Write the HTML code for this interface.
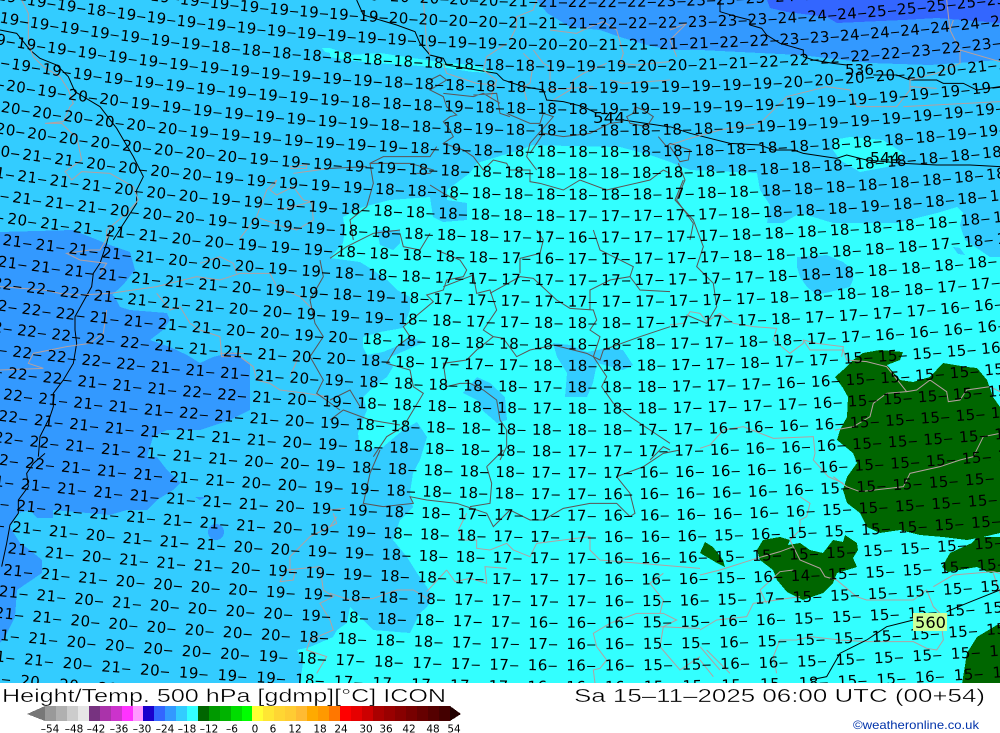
<!DOCTYPE html>
<html><head><meta charset="utf-8"><title>Height/Temp. 500 hPa</title>
<style>
html,body{margin:0;padding:0;background:#fff;width:1000px;height:733px;overflow:hidden}
svg{display:block}
.t text{font:15px "DejaVu Sans",sans-serif;letter-spacing:.5px;fill:#000}
.a{fill:none;stroke:#b5a0a0;stroke-width:3}
.b{fill:none;stroke:#5f5252;stroke-width:3}
.k{fill:none;stroke:#000;stroke-width:3}
.l text{font:10.5px "DejaVu Sans",sans-serif;text-anchor:middle;fill:#000}
</style></head><body>
<svg width="1000" height="733" viewBox="0 0 1000 733" xmlns="http://www.w3.org/2000/svg">
<defs>
<path id="rm" d="M-40 -51.7Q500 49.1 1040 -22.9"/><path id="r0" d="M-40 -29.2Q500 69.7 1040 -.9"/><path id="r1" d="M-40 -6.7Q500 90.4 1040 21"/><path id="r2" d="M-40 15.7Q500 111 1040 42.9"/><path id="r3" d="M-40 38.2Q500 131.7 1040 64.9"/><path id="r4" d="M-40 60.6Q500 152.3 1040 86.8"/><path id="r5" d="M-40 82.9Q500 173.1 1040 108.7"/><path id="r6" d="M-40 105.3Q500 193.8 1040 130.6"/><path id="r7" d="M-40 127.6Q500 214.5 1040 152.4"/><path id="r8" d="M-40 149.9Q500 235.3 1040 174.3"/><path id="r9" d="M-40 172.2Q500 256.1 1040 196.1"/><path id="r10" d="M-40 194.4Q500 276.9 1040 218"/><path id="r11" d="M-40 216.6Q500 297.7 1040 239.8"/><path id="r12" d="M-40 238.8Q500 318.5 1040 261.6"/><path id="r13" d="M-40 261Q500 339.3 1040 283.4"/><path id="r14" d="M-40 283.2Q500 360.2 1040 305.2"/><path id="r15" d="M-40 305.3Q500 381.1 1040 327"/><path id="r16" d="M-40 327.4Q500 401.9 1040 348.7"/><path id="r17" d="M-40 349.6Q500 422.8 1040 370.5"/><path id="r18" d="M-40 371.7Q500 443.7 1040 392.3"/><path id="r19" d="M-40 393.7Q500 464.6 1040 414"/><path id="r20" d="M-40 415.8Q500 485.6 1040 435.7"/><path id="r21" d="M-40 437.8Q500 506.5 1040 457.5"/><path id="r22" d="M-40 459.9Q500 527.5 1040 479.2"/><path id="r23" d="M-40 481.9Q500 548.4 1040 500.9"/><path id="r24" d="M-40 503.9Q500 569.4 1040 522.6"/><path id="r25" d="M-40 525.9Q500 590.4 1040 544.3"/><path id="r26" d="M-40 547.8Q500 611.4 1040 566"/><path id="r27" d="M-40 569.8Q500 632.4 1040 587.7"/><path id="r28" d="M-40 591.7Q500 653.4 1040 609.4"/><path id="r29" d="M-40 613.7Q500 674.4 1040 631"/><path id="r30" d="M-40 635.6Q500 695.4 1040 652.7"/><path id="r31" d="M-40 657.5Q500 716.5 1040 674.4"/><path id="r32" d="M-40 679.4Q500 737.5 1040 696"/>
</defs>

<rect width="1000" height="733" fill="#33ccff"/>
<g shape-rendering="crispEdges">
<polygon fill="#3399ff" points="537,0 547,13 570,27 600,30 620,37 647,45 670,50 700,50 800,55 870,63 930,65 1000,60 1000,0"/>
<polygon fill="#3366ff" points="767,0 770,8 787,12 827,17 837,23 903,20 937,18 1000,23 1000,0"/>
<polygon fill="#3399ff" points="0,232 73,230 110,245 130,252 135,270 123,285 112,295 115,297 120,307 130,310 167,313 170,320 163,330 150,340 170,347 187,355 200,363 213,357 233,352 250,363 250,390 250,410 230,420 200,430 167,430 153,437 147,457 157,457 167,470 180,483 173,490 157,500 147,510 127,510 110,515 53,510 53,518 37,518 30,510 18,513 10,527 20,543 30,550 42,560 42,573 17,590 15,617 5,637 0,643"/>
<circle cx="216" cy="532" r="8" fill="#3399ff"/>
<polygon fill="#3399ff" points="195,497 207,497 200,500"/>
<polygon fill="#33ffff" points="330,48 350,55 380,53 413,58 447,63 473,65 497,73 473,72 447,68 407,65 373,63 347,60 330,57"/>
<polygon fill="#33ffff" points="322,48 330,48 330,53 325,52"/>
<polygon fill="#33ffff" points="833,140 850,137 883,140 903,153 887,167 860,172 840,160 833,150"/>
<polygon fill="#33ffff" points="343,217 363,207 390,200 430,197 433,217 443,222 467,220 467,203 447,200 447,190 470,173 477,163 497,157 520,150 533,145 570,146 620,147 650,155 670,162 690,170 757,173 760,190 770,205 767,223 783,223 800,213 833,223 897,223 937,213 957,207 963,213 960,225 965,240 990,257 1000,257 1000,684 300,684 303,663 297,650 310,647 333,637 337,630 347,623 350,607 363,620 373,630 410,633 420,613 427,607 433,597 427,587 417,573 407,557 393,540 400,520 413,507 410,493 413,473 420,460 427,437 417,422 403,430 383,447 360,450 358,433 363,420 367,410 363,397 373,387 387,377 393,367 388,358 402,352 425,342 410,337 400,345 383,352 367,355 363,347 363,337 380,332 403,328 410,310 410,297 397,290 387,280 373,270 360,262 330,258 343,243 345,230"/>
<polygon fill="#33ccff" points="377,230 400,230 400,243 393,250 380,245"/>
<polygon fill="#33ccff" points="463,393 477,377 490,383 505,397 507,420 497,423 482,410 477,400"/>
<polygon fill="#33ccff" points="553,343 570,345 587,352 607,348 623,350 633,365 623,370 597,363 593,383 587,397 565,397 567,373 557,357"/>
<polygon fill="#33ccff" points="797,257 827,255 843,262 853,270 853,280 850,287 817,295 807,287 800,277 797,267"/>
<polygon fill="#33ccff" points="953,247 960,248 965,255 958,254"/>
<g fill="#006600">
<polygon points="853,360 863,353 880,350 903,352 900,360 887,365 900,380 913,382 930,377 943,363 967,367 977,368 987,380 993,397 1000,407 1000,533 983,537 967,540 943,537 920,535 900,530 880,533 867,527 860,513 847,503 843,490 847,477 857,463 853,453 837,440 840,430 847,417 848,397 843,388 835,377 843,370"/>
<polygon points="1000,537 977,537 972,543 963,547 950,553 942,567 948,572 977,567 990,573 1000,572"/>
<polygon points="757,550 763,540 780,537 790,540 788,545 800,543 810,550 823,553 833,540 843,542 845,535 857,543 858,550 853,558 857,567 837,573 833,583 823,593 803,600 787,592 777,580 773,570 760,560"/>
<polygon points="700,553 705,542 713,547 723,560 725,567 717,563"/>
<polygon points="962,684 967,653 977,637 997,625 1000,625 1000,684"/>
</g>
</g>

<g transform="translate(0,0) scale(.33333)">
<path class="k" d="M0 90L50 100 90 150 120 175 170 195 205 230 225 275 300 320 350 385 400 470 430 530 410 570 410 610 365 680 340 720"/>
<path class="a" d="M65 0L85 40 85 130 100 170 130 200 180 230 205 270 220 310 210 320 190 365 135 370 185 370 210 395 230 410 245 480 195 515 215 540 245 515 330 520 400 560 415 600 380 640 320 690 320 720"/>
<path class="a" d="M720 715L770 650 800 570 830 540 825 555 810 570 830 585 880 560 910 600 935 605 940 660 890 690 850 680 780 655M835 630L880 620 935 605M870 500L920 495 920 505 870 505M880 520L990 505"/>
</g>
<g transform="translate(0,230) scale(.33333)">
<path class="k" d="M330 0L320 40 300 100 280 130 275 170 250 215 225 260 225 300 230 340 220 400 190 450 160 490 160 530 150 560 120 620 115 680"/>
<path class="a" d="M0 170L130 180 180 190 240 195 330 190 470 170 590 140 660 150 720 130 810 130 830 170 900 200 940 240M470 190L510 240 540 230 570 280 600 300 660 320 665 380 720 380 760 410 770 450 810 460 840 480 920 490 980 500M320 240L310 310 270 340 200 350 100 370 85 400 130 415 0 420M330 10L300 60 270 60 200 70 240 90 320 100 300 130M600 100L660 80 700 100 710 130M660 370L740 370M900 370L870 440"/>
<path class="b" d="M960 90L970 140 930 210 945 280 970 320 930 380 970 450 950 490 1020 540"/>
</g>
<g transform="translate(0,450) scale(.33333)">
<path class="k" d="M135 10L100 40 80 70 85 110 55 150 55 190 30 225 20 280 5 350"/>
<path class="a" d="M1000 190L1010 220 930 260 870 320 870 370 885 365 880 390 840 395 860 360 960 350 970 420 1000 440 960 460 990 510 1000 540 930 570 920 600 980 620 950 670"/>
</g>
<g transform="translate(330,0) scale(.33333)">
<path class="k" d="M80 0L100 45 200 75 255 95 270 130 300 165 340 175 350 195 440 210 500 220 520 240 580 260 640 270 650 300 700 305 760 320 800 340M880 360L1020 381"/>
<path class="a" d="M280 0L290 130 300 165M540 120L560 80 560 50 610 30 620 0M530 130L470 170 460 210 500 240 480 300M610 150L640 190 660 200 660 240M580 160L610 190 600 250 580 260 590 300M660 90L740 100 780 80 820 65 860 90 880 160 870 190 920 195 1020 185M670 300L720 270 730 240 760 220 830 190M650 270L790 260M1020 240L880 250 840 240M340 190L350 220 440 250 500 255"/>
<path class="b" d="M300 240L330 225 350 240 300 270 340 290 350 320 380 345 360 350 340 365 360 390 370 410 340 430 400 450 430 470 460 510 490 480 530 490 540 510 600 510 600 545 630 550 700 570 750 540 830 570 960 540 1000 510 1020 520M320 440L300 470 160 470 120 490 130 550 110 620 60 660 70 720M0 505L110 500M120 490L240 490 310 510 300 520 260 520M300 555L340 580 380 600M600 460L640 400 700 410 780 400 840 370 880 365M530 340L600 370 630 370 640 340 670 350 600 430 590 470 620 510M430 285L500 280 510 340 540 350M340 280L430 290 460 280 510 310M915 320L940 330 970 350 950 380 900 370 890 350 910 340 915 320M985 410L1010 440 1020 430"/>
</g>
<g transform="translate(330,230) scale(.33333)">
<path class="b" d="M0 85L50 50 130 10 210 0M210 10L220 50 270 60 300 10M320 60L390 90 410 120 400 140 350 150 340 180 290 195 310 215 220 290 240 320 200 350 170 400 240 420 250 470 280 490 250 540 220 590 170 620 130 680M340 170L430 135 440 190 480 180 500 240 460 300 490 320 440 360 410 390 340 400 350 470 390 460 420 460 460 480 500 510 510 570 530 600 530 650 510 690M480 190L570 140 610 145 680 210 720 235 790 240 800 270 780 300 810 320 790 380 830 440 815 470 850 520 900 560 960 600 1020 640M570 130L570 85 630 70 640 30 620 0M490 320L520 325 560 380 600 360 650 350 670 345 770 370 810 390 820 360 930 320 1020 290M780 240L780 180 840 150 900 140 910 110 810 60 790 0M900 140L930 180 1020 185M0 570L40 540 120 570 210 585M0 510L60 480 90 530M960 690L1000 650 1020 660"/>
</g>
<g transform="translate(330,450) scale(.33333)">
<path class="b" d="M150 0L120 70 100 160 160 170 250 160 240 140 290 150 380 160 470 190 490 230 540 180 600 210 640 210 700 175 780 160 860 160 900 200 915 190 900 130 860 80 940 50 1000 10 1050 0M470 50L520 0M470 50L485 100 480 160 420 170"/>
<path class="a" d="M0 180L45 175M20 200L0 230M410 190L385 240 400 270 440 270 440 295 480 300 530 280 550 300 600 320 620 280 780 260 780 300 810 330 1110 355M350 360L375 395 420 385 470 400 465 350 530 355M0 430L60 450 130 445 200 420 250 420 300 450M350 360L290 425M920 490L1000 490 1040 510 1000 530 990 590 1050 660 1110 620M800 590L790 550 840 520 920 490M800 590L830 630 810 655 790 660 795 700M980 530L1110 535M1000 370L960 400 1000 450 990 490"/>
</g>
<g transform="translate(670,0) scale(.33333)">
<path class="k" d="M150 0L150 35 200 50 240 60 240 75 275 85 290 105 330 130 400 150 400 170 430 180 490 190 530 195M610 225L680 225 720 240 800 240 820 250 880 250 920 270 990 260M0 380L60 400 180 430 270 435 310 450 370 450 400 460 500 475 530 465 590 480 700 490 800 495 900 495 990 500"/>
<path class="a" d="M0 90L50 70 0 120 20 170M850 60L840 90 870 150 870 190 800 220 720 240 720 270 680 320 560 320 540 270 470 260 350 290 270 370 150 390 60 415 0 435M700 320L990 305M840 90L830 0M870 150L990 185M720 260L800 265"/>
<path class="b" d="M0 430L60 450 55 480 30 485 0 440M25 490L45 540 20 600 70 670 60 720"/>
</g>
<g transform="translate(670,180) scale(.33333)">
<path class="b" d="M40 0L15 60 70 120 100 200 80 260 130 310 140 380 110 430 50 405"/>
<path class="a" d="M0 435L40 430 60 395 90 400 110 425 150 400 190 430 250 440 320 445 310 480 360 520 400 490 400 480 440 490 520 500 515 530"/>
</g>
<g transform="translate(700,340) scale(.33333)">
<path class="a" d="M310 0L330 30 430 30 440 60 500 65 560 80 600 130 620 155 650 150 690 120 740 155 745 185 780 180 800 150 870 140 900 155M405 270L460 260 510 230 520 190 560 160 620 155M400 410L440 440 480 455 610 440 630 400 720 380 780 360 820 350 850 290 900 280M0 325L30 315 70 270 130 260 220 295 340 290 345 340 340 360 385 410 430 430M300 470L330 490 320 530 300 540 300 570 270 600 280 620 300 660 360 685 375 710 410 720 470 770 500 780 640 780 680 750 700 800 720 820 730 900 710 930 680 925 640 905 500 905 420 900 330 890 290 900 240 900 220 950 230 1000M0 705L60 690 170 655 240 635 280 620M180 750L240 695 280 690M180 750L200 790M0 870L50 840 140 830 160 790 300 770M700 740L760 705 880 695 900 700M880 700L900 760M0 920L60 990M20 930L90 1000M0 960L40 1010"/>
<path class="k" d="M900 750L800 790 740 815M640 840L560 860 500 900 420 940 380 1010 330 1020"/>
</g>

<g class="t">
<text word-spacing="-5.74"><textPath href="#rm" startOffset="374">19‒ 19‒ 20‒ 20‒ 20‒ 20‒ 21‒ 21‒ 22‒ 22‒ 22‒ 23‒ 23‒ 23‒ 23‒ 24‒ 24‒</textPath></text>
<text word-spacing="-5.45"><textPath href="#r0" startOffset="192.1">19‒ 19‒ 19‒ 19‒ 19‒ 19‒ 19‒ 19‒ 20‒ 20‒ 20‒ 20‒ 21‒ 21‒ 21‒ 22‒ 22‒ 22‒ 23‒ 23‒ 23‒ 24‒ 24‒ 24‒ 25‒ 25‒ 25‒ 25‒ 25‒</textPath></text>
<text word-spacing="-5.17"><textPath href="#r1" startOffset="37">19‒ 19‒ 19‒ 18‒ 19‒ 19‒ 19‒ 19‒ 19‒ 19‒ 19‒ 19‒ 19‒ 19‒ 19‒ 19‒ 19‒ 20‒ 20‒ 20‒ 21‒ 21‒ 21‒ 21‒ 22‒ 22‒ 23‒ 23‒ 24‒ 24‒ 24‒ 24‒ 24‒ 24‒</textPath></text>
<text word-spacing="-4.88"><textPath href="#r2" startOffset="39.5">19‒ 19‒ 19‒ 19‒ 19‒ 19‒ 19‒ 18‒ 18‒ 18‒ 18‒ 18‒ 18‒ 18‒ 18‒ 18‒ 18‒ 18‒ 19‒ 19‒ 19‒ 20‒ 20‒ 21‒ 21‒ 22‒ 22‒ 22‒ 22‒ 22‒ 23‒ 22‒ 23‒ 22‒</textPath></text>
<text word-spacing="-4.6"><textPath href="#r3" startOffset="25.9">19‒ 19‒ 19‒ 19‒ 19‒ 19‒ 19‒ 19‒ 19‒ 19‒ 19‒ 19‒ 19‒ 18‒ 18‒ 18‒ 18‒ 18‒ 18‒ 18‒ 19‒ 19‒ 19‒ 19‒ 19‒ 19‒ 20‒ 20‒ 20‒ 20‒ 20‒ 20‒ 21‒ 21‒</textPath></text>
<text word-spacing="-4.31"><textPath href="#r4" startOffset="20.3">19‒ 19‒ 19‒ 19‒ 19‒ 19‒ 19‒ 19‒ 19‒ 19‒ 19‒ 19‒ 18‒ 18‒ 18‒ 19‒ 18‒ 18‒ 18‒ 18‒ 19‒ 19‒ 19‒ 19‒ 19‒ 19‒ 19‒ 19‒ 19‒ 19‒ 19‒ 19‒ 19‒ 19‒</textPath></text>
<text word-spacing="-4.03"><textPath href="#r5" startOffset="14.8">20‒ 20‒ 19‒ 20‒ 20‒ 19‒ 19‒ 19‒ 19‒ 19‒ 19‒ 19‒ 19‒ 18‒ 18‒ 18‒ 19‒ 18‒ 18‒ 18‒ 18‒ 18‒ 18‒ 18‒ 19‒ 19‒ 19‒ 19‒ 19‒ 19‒ 19‒ 19‒ 19‒ 19‒</textPath></text>
<text word-spacing="-3.74"><textPath href="#r6" startOffset="9.2">20‒ 20‒ 20‒ 20‒ 20‒ 20‒ 20‒ 19‒ 19‒ 19‒ 19‒ 19‒ 19‒ 19‒ 18‒ 19‒ 18‒ 18‒ 18‒ 18‒ 18‒ 18‒ 18‒ 18‒ 18‒ 18‒ 18‒ 18‒ 18‒ 18‒ 18‒ 19‒ 19‒ 19‒</textPath></text>
<text word-spacing="-3.46"><textPath href="#r7" startOffset="3.6">20‒ 20‒ 20‒ 20‒ 20‒ 20‒ 20‒ 20‒ 20‒ 19‒ 19‒ 19‒ 19‒ 19‒ 18‒ 18‒ 18‒ 18‒ 18‒ 18‒ 18‒ 18‒ 18‒ 18‒ 18‒ 18‒ 18‒ 18‒ 18‒ 18‒ 18‒ 18‒ 18‒ 18‒</textPath></text>
<text word-spacing="-3.17"><textPath href="#r8" startOffset="30.3">20‒ 21‒ 21‒ 20‒ 20‒ 20‒ 20‒ 19‒ 19‒ 19‒ 19‒ 19‒ 18‒ 18‒ 18‒ 18‒ 18‒ 18‒ 18‒ 18‒ 18‒ 17‒ 18‒ 18‒ 18‒ 18‒ 18‒ 18‒ 18‒ 18‒ 18‒ 18‒ 18‒</textPath></text>
<text word-spacing="-2.89"><textPath href="#r9" startOffset="25">21‒ 21‒ 21‒ 21‒ 20‒ 20‒ 20‒ 19‒ 19‒ 19‒ 19‒ 18‒ 18‒ 18‒ 18‒ 18‒ 18‒ 18‒ 17‒ 17‒ 17‒ 17‒ 17‒ 18‒ 18‒ 18‒ 18‒ 19‒ 18‒ 18‒ 18‒ 18‒</textPath></text>
<text word-spacing="-2.6"><textPath href="#r10" startOffset="19.6">21‒ 21‒ 21‒ 21‒ 20‒ 20‒ 20‒ 19‒ 19‒ 19‒ 19‒ 18‒ 18‒ 18‒ 18‒ 18‒ 17‒ 17‒ 16‒ 17‒ 17‒ 17‒ 17‒ 18‒ 18‒ 18‒ 18‒ 18‒ 18‒ 18‒ 18‒ 18‒ 18‒</textPath></text>
<text word-spacing="-2.32"><textPath href="#r11" startOffset="14.3">20‒ 20‒ 21‒ 21‒ 21‒ 21‒ 20‒ 20‒ 19‒ 19‒ 19‒ 18‒ 18‒ 18‒ 18‒ 18‒ 17‒ 16‒ 17‒ 17‒ 17‒ 17‒ 17‒ 18‒ 18‒ 18‒ 18‒ 18‒ 18‒ 17‒ 18‒ 18‒</textPath></text>
<text word-spacing="-2.03"><textPath href="#r12" startOffset="9.1">21‒ 21‒ 21‒ 21‒ 21‒ 21‒ 20‒ 20‒ 20‒ 19‒ 19‒ 18‒ 18‒ 18‒ 17‒ 17‒ 17‒ 17‒ 17‒ 17‒ 17‒ 17‒ 17‒ 17‒ 18‒ 18‒ 18‒ 18‒ 18‒ 18‒ 18‒ 18‒</textPath></text>
<text word-spacing="-1.75"><textPath href="#r13" startOffset="3.9">22‒ 21‒ 21‒ 21‒ 21‒ 21‒ 21‒ 21‒ 20‒ 19‒ 19‒ 18‒ 19‒ 18‒ 17‒ 17‒ 17‒ 17‒ 17‒ 17‒ 17‒ 17‒ 17‒ 17‒ 18‒ 18‒ 18‒ 18‒ 18‒ 17‒ 17‒ 17‒</textPath></text>
<text word-spacing="-1.46"><textPath href="#r14" startOffset="32.5">22‒ 22‒ 22‒ 21‒ 21‒ 21‒ 21‒ 20‒ 20‒ 19‒ 19‒ 19‒ 18‒ 18‒ 17‒ 17‒ 18‒ 18‒ 18‒ 17‒ 17‒ 17‒ 17‒ 18‒ 17‒ 17‒ 17‒ 17‒ 16‒ 16‒ 16‒</textPath></text>
<text word-spacing="-1.18"><textPath href="#r15" startOffset="27.6">22‒ 22‒ 22‒ 21‒ 21‒ 21‒ 21‒ 20‒ 20‒ 19‒ 20‒ 18‒ 18‒ 18‒ 18‒ 18‒ 18‒ 18‒ 18‒ 18‒ 17‒ 17‒ 18‒ 18‒ 17‒ 17‒ 16‒ 16‒ 16‒ 16‒</textPath></text>
<text word-spacing="-.89"><textPath href="#r16" startOffset="22.6">22‒ 22‒ 22‒ 22‒ 22‒ 21‒ 21‒ 21‒ 21‒ 20‒ 20‒ 18‒ 18‒ 17‒ 17‒ 17‒ 18‒ 18‒ 18‒ 18‒ 17‒ 17‒ 18‒ 17‒ 17‒ 15‒ 15‒ 15‒ 15‒ 16‒</textPath></text>
<text word-spacing="-.61"><textPath href="#r17" startOffset="17.6">22‒ 22‒ 22‒ 22‒ 22‒ 21‒ 21‒ 21‒ 21‒ 20‒ 19‒ 18‒ 18‒ 18‒ 18‒ 18‒ 17‒ 18‒ 18‒ 18‒ 17‒ 17‒ 17‒ 16‒ 16‒ 15‒ 15‒ 15‒ 15‒ 15‒</textPath></text>
<text word-spacing="-.32"><textPath href="#r18" startOffset="12.7">22‒ 22‒ 22‒ 21‒ 21‒ 21‒ 22‒ 22‒ 21‒ 20‒ 19‒ 18‒ 18‒ 18‒ 18‒ 18‒ 17‒ 18‒ 18‒ 18‒ 17‒ 17‒ 17‒ 17‒ 16‒ 15‒ 15‒ 15‒ 15‒ 15‒</textPath></text>
<text word-spacing="-.04"><textPath href="#r19" startOffset="7.7">22‒ 22‒ 21‒ 21‒ 21‒ 21‒ 22‒ 21‒ 21‒ 20‒ 19‒ 18‒ 18‒ 18‒ 18‒ 18‒ 18‒ 18‒ 18‒ 17‒ 17‒ 16‒ 16‒ 16‒ 16‒ 15‒ 15‒ 15‒ 15‒ 15‒</textPath></text>
<text word-spacing=".25"><textPath href="#r20" startOffset="38.3">22‒ 21‒ 21‒ 21‒ 21‒ 21‒ 21‒ 21‒ 20‒ 19‒ 18‒ 18‒ 18‒ 18‒ 18‒ 18‒ 17‒ 17‒ 17‒ 17‒ 16‒ 16‒ 16‒ 16‒ 15‒ 15‒ 15‒ 15‒ 15‒</textPath></text>
<text word-spacing=".54"><textPath href="#r21" startOffset="33.6">22‒ 22‒ 21‒ 21‒ 21‒ 21‒ 21‒ 20‒ 20‒ 19‒ 18‒ 18‒ 18‒ 18‒ 18‒ 17‒ 17‒ 17‒ 16‒ 16‒ 16‒ 16‒ 16‒ 16‒ 15‒ 15‒ 15‒ 15‒ 15‒</textPath></text>
<text word-spacing=".82"><textPath href="#r22" startOffset="28.9">22‒ 22‒ 21‒ 21‒ 21‒ 21‒ 21‒ 20‒ 20‒ 19‒ 19‒ 18‒ 18‒ 18‒ 18‒ 17‒ 17‒ 16‒ 16‒ 16‒ 16‒ 16‒ 16‒ 15‒ 15‒ 15‒ 15‒ 15‒ 15‒</textPath></text>
<text word-spacing="1.1"><textPath href="#r23" startOffset="24.2">21‒ 21‒ 21‒ 21‒ 21‒ 21‒ 21‒ 21‒ 20‒ 19‒ 19‒ 18‒ 18‒ 17‒ 17‒ 17‒ 17‒ 16‒ 16‒ 16‒ 16‒ 16‒ 16‒ 15‒ 15‒ 15‒ 15‒ 15‒ 15‒</textPath></text>
<text word-spacing="1.39"><textPath href="#r24" startOffset="19.5">21‒ 21‒ 21‒ 21‒ 21‒ 21‒ 21‒ 21‒ 20‒ 19‒ 19‒ 18‒ 18‒ 18‒ 17‒ 17‒ 17‒ 16‒ 16‒ 16‒ 15‒ 16‒ 15‒ 15‒ 15‒ 15‒ 15‒ 15‒ 15‒</textPath></text>
<text word-spacing="1.68"><textPath href="#r25" startOffset="14.8">21‒ 21‒ 21‒ 20‒ 21‒ 21‒ 21‒ 20‒ 20‒ 19‒ 19‒ 18‒ 18‒ 18‒ 17‒ 17‒ 17‒ 16‒ 16‒ 16‒ 15‒ 15‒ 15‒ 15‒ 15‒ 15‒ 15‒ 15‒</textPath></text>
<text word-spacing="1.96"><textPath href="#r26" startOffset="10.1">21‒ 21‒ 21‒ 20‒ 21‒ 21‒ 21‒ 20‒ 19‒ 19‒ 19‒ 18‒ 18‒ 17‒ 17‒ 17‒ 17‒ 16‒ 16‒ 16‒ 15‒ 16‒ 14‒ 15‒ 15‒ 15‒ 15‒ 15‒</textPath></text>
<text word-spacing="2.25"><textPath href="#r27" startOffset="5.4">21‒ 21‒ 21‒ 21‒ 20‒ 20‒ 20‒ 20‒ 19‒ 19‒ 18‒ 18‒ 18‒ 17‒ 17‒ 17‒ 17‒ 16‒ 15‒ 16‒ 15‒ 17‒ 15‒ 15‒ 15‒ 15‒ 15‒ 15‒</textPath></text>
<text word-spacing="2.53"><textPath href="#r28" startOffset="38.6">21‒ 21‒ 20‒ 21‒ 20‒ 20‒ 20‒ 20‒ 19‒ 18‒ 18‒ 18‒ 17‒ 17‒ 16‒ 16‒ 16‒ 15‒ 15‒ 16‒ 16‒ 15‒ 15‒ 15‒ 15‒ 15‒ 15‒</textPath></text>
<text word-spacing="2.82"><textPath href="#r29" startOffset="34.2">21‒ 21‒ 20‒ 20‒ 20‒ 20‒ 20‒ 20‒ 18‒ 18‒ 18‒ 18‒ 17‒ 17‒ 17‒ 16‒ 16‒ 15‒ 15‒ 16‒ 15‒ 15‒ 15‒ 15‒ 15‒ 15‒ 15‒</textPath></text>
<text word-spacing="3.1"><textPath href="#r30" startOffset="29.8">21‒ 21‒ 20‒ 20‒ 20‒ 20‒ 20‒ 19‒ 18‒ 17‒ 18‒ 17‒ 17‒ 17‒ 16‒ 16‒ 16‒ 15‒ 15‒ 16‒ 16‒ 15‒ 15‒ 15‒ 15‒ 15‒ 15‒</textPath></text>
<text word-spacing="3.39"><textPath href="#r31" startOffset="25.3">21‒ 21‒ 20‒ 21‒ 20‒ 19‒ 19‒ 19‒ 18‒ 17‒ 17‒ 17‒ 17‒ 17‒ 16‒ 16‒ 16‒ 15‒ 15‒ 15‒ 15‒ 18‒ 15‒ 15‒ 16‒ 15‒ 15‒</textPath></text>
<text word-spacing="3.67"><textPath href="#r32" startOffset="21">20‒ 20‒ 20‒ 20‒ 20‒</textPath></text>
</g>

<g font-family="'DejaVu Sans',sans-serif" font-size="15" fill="#000">
<text x="593" y="123" textLength="32" lengthAdjust="spacingAndGlyphs">544</text>
<text x="845" y="75" textLength="29" lengthAdjust="spacingAndGlyphs">536</text>
<text x="870" y="163" textLength="30" lengthAdjust="spacingAndGlyphs">544</text>
</g>
<rect x="913" y="613" width="34" height="18" fill="#ccff99"/>
<text x="915" y="628" font-family="'DejaVu Sans',sans-serif" font-size="16" textLength="31" lengthAdjust="spacingAndGlyphs" fill="#000">560</text>

<rect x="0" y="683" width="1000" height="50" fill="#fff"/>
<g font-family="'Liberation Sans',sans-serif" font-size="18" fill="#000" stroke="#fff" stroke-width=".35">
<text x="2" y="702" textLength="444" lengthAdjust="spacingAndGlyphs">Height/Temp. 500 hPa [gdmp][°C] ICON</text>
<text x="574" y="702" textLength="411" lengthAdjust="spacingAndGlyphs">Sa 15–11–2025 06:00 UTC (00+54)</text>
</g>
<g shape-rendering="crispEdges">
<polygon points="27,714 45,706 45,721" fill="#777"/>
<rect x="45" y="706" width="11" height="15" fill="#999"/><rect x="56" y="706" width="11" height="15" fill="#b0b0b0"/><rect x="67" y="706" width="11" height="15" fill="#ccc"/><rect x="78" y="706" width="11" height="15" fill="#e6e6e6"/>
<rect x="89" y="706" width="11" height="15" fill="#773380"/><rect x="100" y="706" width="11" height="15" fill="#aa33aa"/><rect x="111" y="706" width="11" height="15" fill="#cc33cc"/><rect x="122" y="706" width="11" height="15" fill="#ff33ff"/><rect x="133" y="706" width="10" height="15" fill="#ff99ff"/>
<rect x="143" y="706" width="11" height="15" fill="#1a00cc"/><rect x="154" y="706" width="11" height="15" fill="#3366ff"/><rect x="165" y="706" width="11" height="15" fill="#3399ff"/><rect x="176" y="706" width="11" height="15" fill="#33ccff"/><rect x="187" y="706" width="11" height="15" fill="#33ffff"/>
<rect x="198" y="706" width="11" height="15" fill="#006600"/><rect x="209" y="706" width="11" height="15" fill="#009900"/><rect x="220" y="706" width="11" height="15" fill="#00b300"/><rect x="231" y="706" width="11" height="15" fill="#00dd00"/><rect x="242" y="706" width="10" height="15" fill="#00ff00"/>
<rect x="252" y="706" width="11" height="15" fill="#ffff33"/><rect x="263" y="706" width="11" height="15" fill="#ffe633"/><rect x="274" y="706" width="11" height="15" fill="#ffd633"/><rect x="285" y="706" width="11" height="15" fill="#ffcc33"/><rect x="296" y="706" width="11" height="15" fill="#ffbb33"/>
<rect x="307" y="706" width="11" height="15" fill="#ffaa00"/><rect x="318" y="706" width="11" height="15" fill="#ff9900"/><rect x="329" y="706" width="11" height="15" fill="#ff7700"/>
<rect x="340" y="706" width="11" height="15" fill="#ff0000"/><rect x="351" y="706" width="11" height="15" fill="#e60000"/><rect x="362" y="706" width="11" height="15" fill="#cc0000"/><rect x="373" y="706" width="11" height="15" fill="#aa0000"/><rect x="384" y="706" width="11" height="15" fill="#990000"/><rect x="395" y="706" width="11" height="15" fill="#880000"/><rect x="406" y="706" width="11" height="15" fill="#770000"/><rect x="417" y="706" width="11" height="15" fill="#660000"/><rect x="428" y="706" width="11" height="15" fill="#550000"/><rect x="439" y="706" width="11" height="15" fill="#440000"/>
<polygon points="450,706 461,714 450,721" fill="#220000"/>
</g>
<g class="l">
<text x="50" y="732.5">–54</text><text x="74" y="732.5">–48</text><text x="96" y="732.5">–42</text><text x="119" y="732.5">–36</text><text x="142" y="732.5">–30</text><text x="165" y="732.5">–24</text><text x="187" y="732.5">–18</text><text x="209" y="732.5">–12</text><text x="232" y="732.5">–6</text><text x="255" y="732.5">0</text><text x="273" y="732.5">6</text><text x="295" y="732.5">12</text><text x="320" y="732.5">18</text><text x="341" y="732.5">24</text><text x="366" y="732.5">30</text><text x="386" y="732.5">36</text><text x="409" y="732.5">42</text><text x="433" y="732.5">48</text><text x="454" y="732.5">54</text>
</g>
<text x="853" y="729" font-family="'Liberation Sans',sans-serif" font-size="12" fill="#0033aa" textLength="126" lengthAdjust="spacingAndGlyphs">©weatheronline.co.uk</text>
</svg>
</body></html>
